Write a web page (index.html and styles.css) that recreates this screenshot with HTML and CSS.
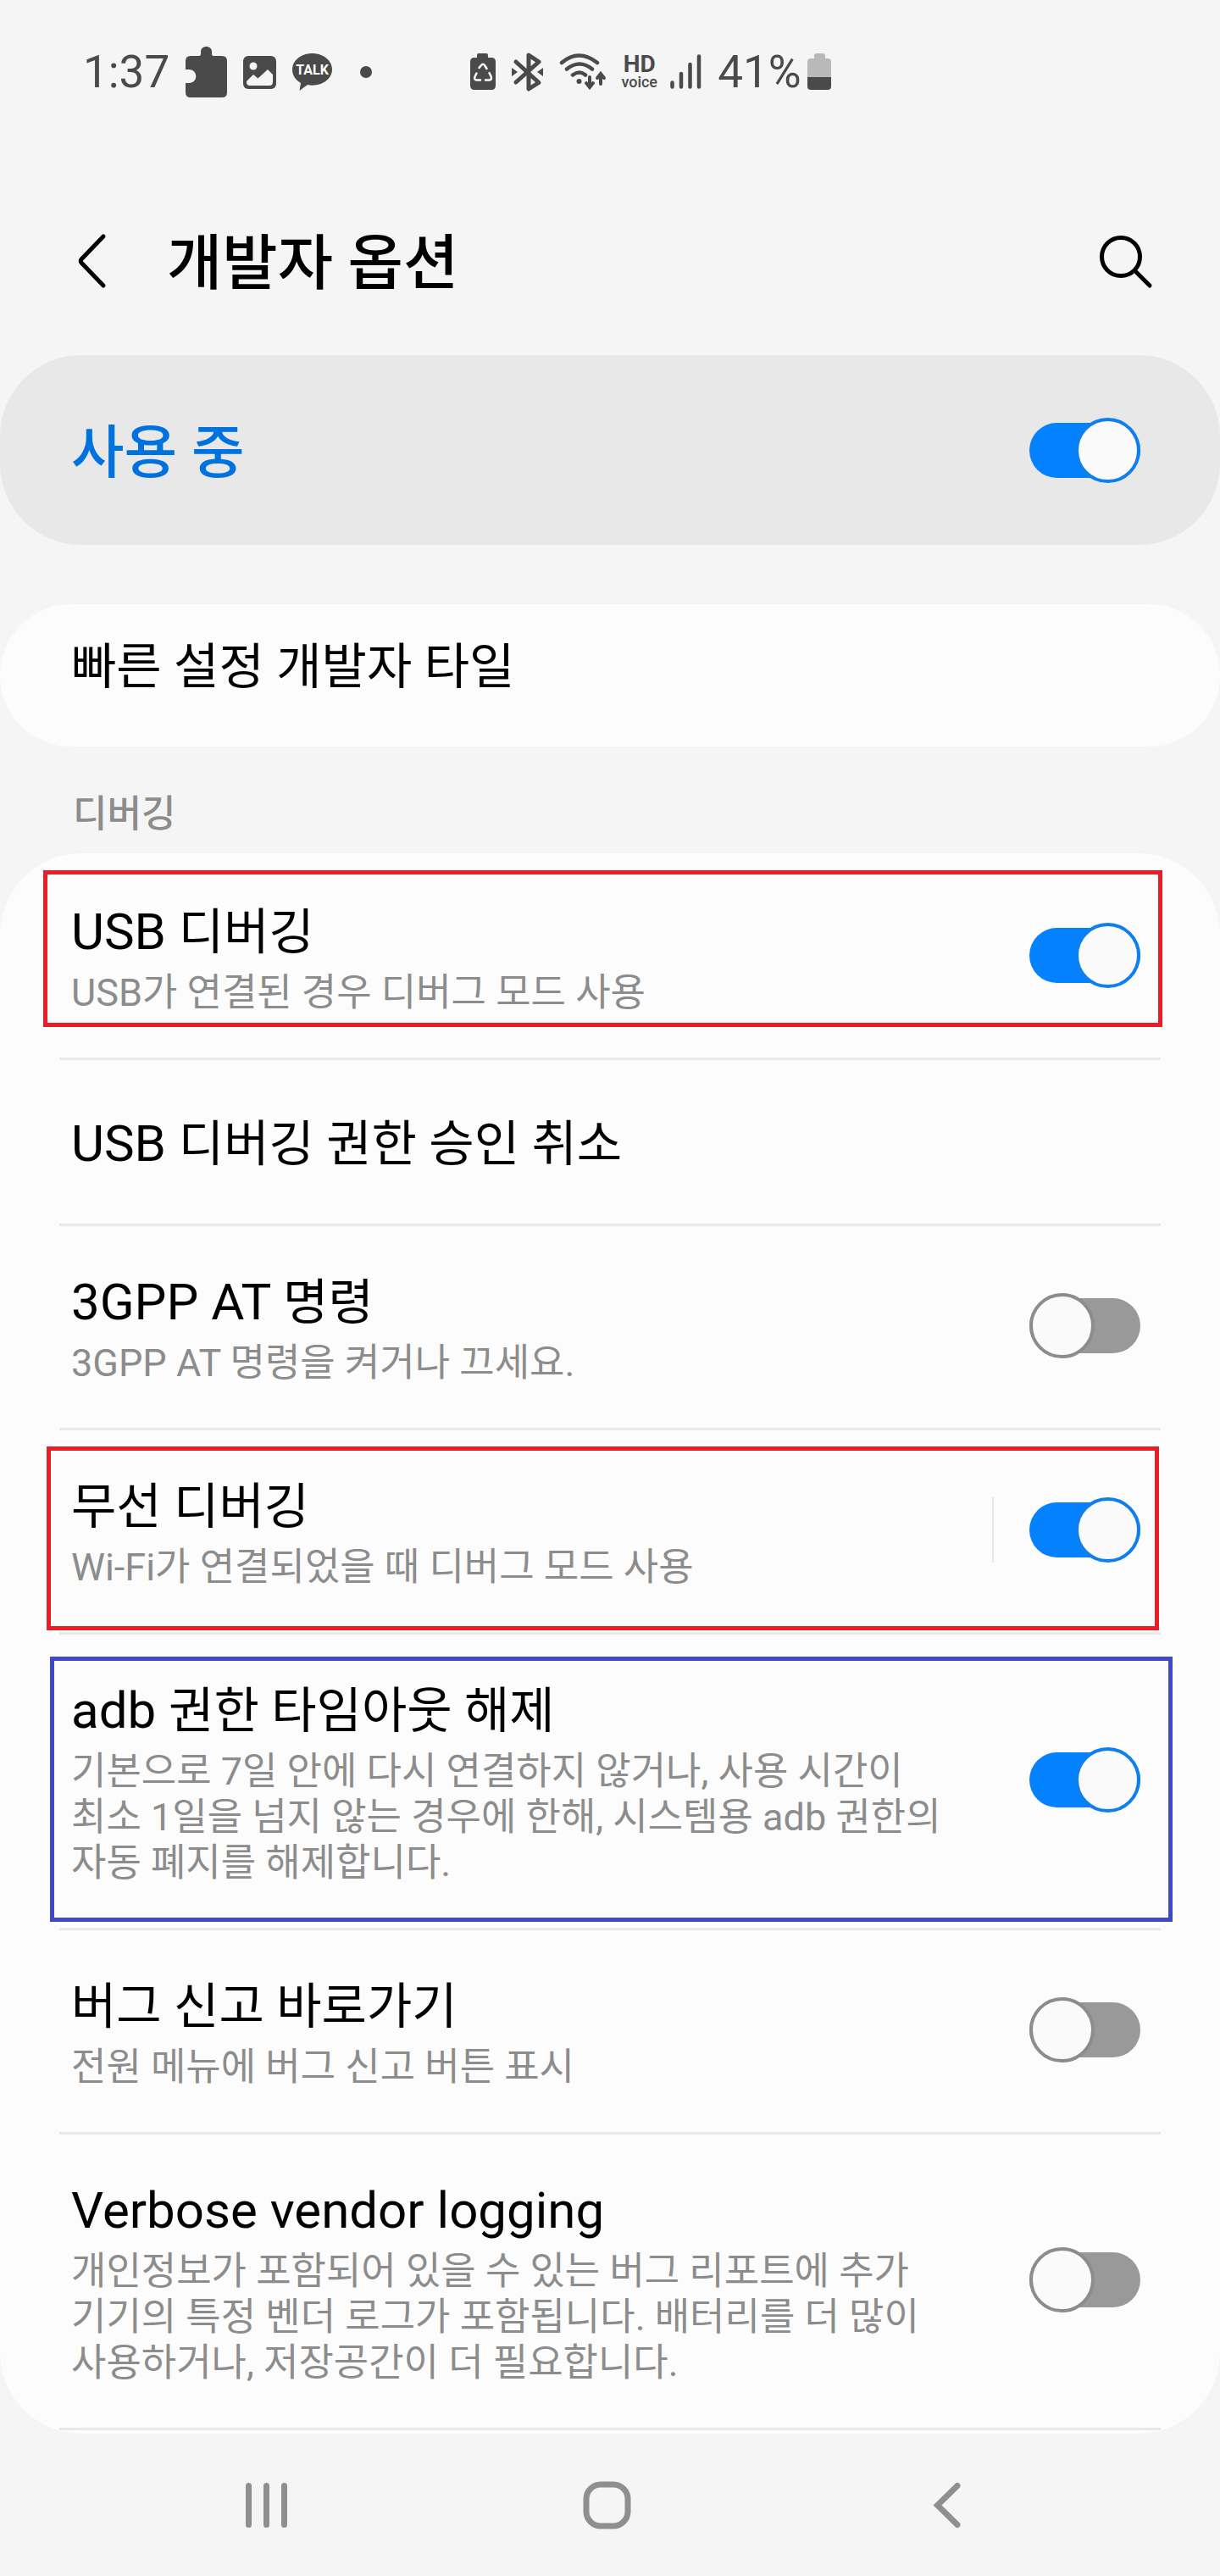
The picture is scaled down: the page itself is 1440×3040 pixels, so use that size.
FILE: index.html
```html
<!DOCTYPE html>
<html lang="ko">
<head>
<meta charset="utf-8">
<meta name="viewport" content="width=device-width, initial-scale=1">
<title>개발자 옵션</title>
<link rel="stylesheet" href="styles.css">
</head>
<body>
  <div class="status-bar">
    <div class="status-left">
      <span>1:37</span>
      <svg width="49" height="60" viewBox="0 0 49 60" fill="#4a4a4a"><path d="M6 11h10c1.500 0 2-1 2-3V6c0-8 13-8 13 0v2c0 2 .5 3 2 3h10q6 0 6 6v37q0 6-6 6H6q-6 0-6-6V43h4c11 0 11-16 0-16H0V17q0-6 6-6z"/></svg>
      <svg width="39" height="60" viewBox="0 0 39 60"><rect y="11" width="39" height="39" rx="6" fill="#4a4a4a"/><circle cx="12" cy="23" r="4.500" fill="#f5f5f5"/><path d="M4 41l8-8 5.500 4.500L29 27l6 6v9q0 4-4 4H8q-4 0-4-4z" fill="#f5f5f5"/></svg>
      <svg width="47" height="60" viewBox="0 0 47 60"><path d="M23.500 8C10.500 8 0 16.500 0 27c0 7 4 12.500 10 16l-1.500 9L18 45q2.500.7 5.500.7C36.500 45.700 47 37.500 47 27S36.500 8 23.500 8z" fill="#4a4a4a"/><text x="23.500" y="33" text-anchor="middle" class="talk">TALK</text></svg>
      <svg class="dot" width="14" height="60" viewBox="0 0 14 60"><circle cx="7" cy="30" r="7" fill="#4a4a4a"/></svg>
    </div>
    <div class="status-right">
      <svg width="30" height="60" viewBox="0 0 30 60"><path d="M5 13h3v-3q0-2 2-2h9q2 0 2 2v3h4q5 0 5 5v28q0 5-5 5H5q-5 0-5-5V18q0-5 5-5z" fill="#4a4a4a"/><g fill="none" stroke="#fff" stroke-width="2.500" stroke-linecap="round"><path d="M10.500 25l2.500-3q2-2.500 4 0l2.500 4"/><path d="M22.500 31l2 4q1.500 4-2 4.500h-4.500"/><path d="M12 39.500H7.500q-3.500-.5-2-4l2-4"/></g></svg>
      <svg width="37" height="60" viewBox="0 0 37 60"><path d="M5 18l27 24.500-12 7.500V10l12 8L5 42" fill="none" stroke="#4a4a4a" stroke-width="5" stroke-linejoin="round" stroke-linecap="round"/><path d="M0 25l7 5-7 5zM37 25l-7 5 7 5z" fill="#4a4a4a"/></svg>
      <svg width="56" height="60" viewBox="0 0 56 60" fill="none" stroke="#4a4a4a" stroke-width="4.500" stroke-linecap="round"><path d="M3 19q20-17 42 0M9 26.500q15-12 30 0M16 33.500q8-6 15 0"/><circle cx="23.500" cy="41" r="3" fill="#4a4a4a" stroke="none"/><path d="M36 36v11m-4-4l4 5 4-5M49 44V33m-4 4l4-5 4 5" stroke-width="4"/></svg>
      <div class="hd"><b>HD</b><span>voice</span></div>
      <svg width="37" height="60" viewBox="0 0 37 60" stroke="#4a4a4a" stroke-width="4.500" stroke-linecap="round"><path d="M2.500 42.500v5M13 32v15.500M23.500 21v26.500M34 11.500v36"/></svg>
      <span>41%</span>
      <svg class="battery" width="28" height="60" viewBox="0 0 28 60"><path d="M4 14h4v-3q0-3 3-3h7q3 0 3 3v3h3q4 0 4 4v18H0V18q0-4 4-4z" fill="#b9b9b9"/><path d="M0 36h28v11q0 4-4 4H4q-4 0-4-4z" fill="#4a4a4a"/></svg>
    </div>
  </div>

  <header class="header">
    <button class="icon-btn" type="button" aria-label="뒤로">
      <svg width="37" height="68" viewBox="0 0 37 68" fill="none" stroke="#000" stroke-width="5" stroke-linecap="round" stroke-linejoin="round"><path d="M32 5L6 32q-1.500 2 0 4l26 27"/></svg>
    </button>
    <h1>개발자 옵션</h1>
    <button class="icon-btn" type="button" aria-label="검색">
      <svg width="66" height="68" viewBox="0 0 66 68" fill="none" stroke="#000" stroke-width="5" stroke-linecap="round"><circle cx="27" cy="29" r="22.500"/><path d="M43.500 45.500L61 63"/></svg>
    </button>
  </header>

  <main>
    <div class="banner">
      <label for="devOptions">사용 중</label>
      <input class="switch" type="checkbox" id="devOptions" checked>
    </div>

    <section class="card">
      <div class="row row-tile">
        <div class="text"><a class="title" href="#tiles">빠른 설정 개발자 타일</a></div>
      </div>
    </section>

    <h2>디버깅</h2>
    <section class="card card-list">
      <div class="row boxed box-usb">
        <div class="text">
          <label class="title" for="usbDebug"><span lang="en">USB </span>디버깅</label>
          <p>USB가 연결된 경우 디버그 모드 사용</p>
        </div>
        <input class="switch" type="checkbox" id="usbDebug" checked>
      </div>
      <div class="row row-single">
        <div class="text"><a class="title" href="#revoke"><span lang="en">USB </span>디버깅 권한 승인 취소</a></div>
      </div>
      <div class="row">
        <div class="text">
          <label class="title" for="atCommand"><span lang="en">3GPP AT </span>명령</label>
          <p>3GPP AT 명령을 켜거나 끄세요.</p>
        </div>
        <input class="switch" type="checkbox" id="atCommand">
      </div>
      <div class="row boxed box-wifi">
        <div class="text">
          <label class="title" for="wifiDebug">무선 디버깅</label>
          <p>Wi-Fi가 연결되었을 때 디버그 모드 사용</p>
        </div>
        <span class="split"></span>
        <input class="switch" type="checkbox" id="wifiDebug" checked>
      </div>
      <div class="row boxed box-adb">
        <div class="text">
          <label class="title" for="adbTimeout"><span lang="en">adb </span>권한 타임아웃 해제</label>
          <p>기본으로 7일 안에 다시 연결하지 않거나, 사용 시간이 최소 1일을 넘지 않는 경우에 한해, 시스템용 adb 권한의 자동 폐지를 해제합니다.</p>
        </div>
        <input class="switch" type="checkbox" id="adbTimeout" checked>
      </div>
      <div class="row">
        <div class="text">
          <label class="title" for="bugReport">버그 신고 바로가기</label>
          <p>전원 메뉴에 버그 신고 버튼 표시</p>
        </div>
        <input class="switch" type="checkbox" id="bugReport">
      </div>
      <div class="row">
        <div class="text">
          <label class="title" for="vendorLog"><span lang="en">Verbose vendor logging</span></label>
          <p>개인정보가 포함되어 있을 수 있는 버그 리포트에 추가 기기의 특정 벤더 로그가 포함됩니다. 배터리를 더 많이 사용하거나, 저장공간이 더 필요합니다.</p>
        </div>
        <input class="switch" type="checkbox" id="vendorLog">
      </div>
    </section>
  </main>

  <nav class="nav-bar">
    <button class="icon-btn" type="button" aria-label="최근 앱">
      <svg width="57" height="57" viewBox="0 0 57 57" stroke="#8f8f8f" stroke-width="7" stroke-linecap="round"><path d="M7.500 5.500v46M28.500 5.500v46M49.500 5.500v46"/></svg>
    </button>
    <button class="icon-btn" type="button" aria-label="홈">
      <svg width="57" height="57" viewBox="0 0 57 57" fill="none" stroke="#8f8f8f" stroke-width="7"><rect x="4" y="4" width="49" height="49" rx="17"/></svg>
    </button>
    <button class="icon-btn" type="button" aria-label="이전">
      <svg width="57" height="57" viewBox="0 0 57 57" fill="none" stroke="#8f8f8f" stroke-width="7" stroke-linecap="round"><path d="M41 5.500L17.500 28.500 41 51.500"/></svg>
    </button>
  </nav>
</body>
</html>
```

FILE: styles.css
```css
*,
*::before,
*::after {
  box-sizing: border-box;
}

body {
  margin: 0;
  background: #f5f5f5;
  color: #000;
  font-family: Roboto, "Noto Sans CJK KR", sans-serif;
  word-break: keep-all;
}

svg {
  display: block;
}

h1, h2, p {
  margin: 0;
}

a {
  color: inherit;
  text-decoration: none;
}

/* status bar */
.status-bar {
  display: flex;
  height: 170px;
  padding: 0 98px;
  gap: 116px;
  align-items: center;
  color: #4a4a4a;
  font-size: 53px;
  line-height: 60px;
}

.status-left,
.status-right {
  display: flex;
  align-items: center;
  gap: 19px;
}

.dot {
  margin-left: 14px;
}

.talk {
  fill: #fff;
  font-size: 16px;
  font-weight: 700;
}

.hd {
  display: flex;
  flex-direction: column;
  align-items: center;
  width: 43px;
  margin: 0 -4px 0 -2px;
}

.hd b {
  font-size: 28px;
  line-height: 24px;
}

.hd span {
  font-size: 18px;
  font-weight: 500;
  line-height: 18px;
}

.battery {
  margin-left: -12px;
}

/* title bar */
.icon-btn {
  padding: 0;
  border: none;
  background: none;
  cursor: pointer;
}

.header {
  display: flex;
  align-items: center;
  height: 249px;
  padding: 26px 78px 0 90px;
}

.header h1 {
  flex: 1;
  margin-left: 70px;
  padding-top: 6px;
  font-size: 71px;
  font-weight: 500;
  line-height: 84px;
}

/* cards */
.banner {
  display: flex;
  align-items: center;
  justify-content: space-between;
  height: 224px;
  padding: 0 94px 0 84px;
  border-radius: 96px;
  background: #e8e8e8;
  color: #0072de;
  font-size: 68px;
  font-weight: 500;
  line-height: 84px;
}

.banner label {
  padding-top: 8px;
}

.card {
  margin-top: 70px;
  border-radius: 84px;
  background: #fcfcfc;
}

.card-list {
  margin-top: 0;
  border-radius: 96px;
}

.card-list::after {
  content: "";
  display: block;
  height: 7px;
  margin: 0 70px;
  border-top: 3px solid #e8e8e8;
}

h2 {
  padding: 50px 84px 16px 86px;
  color: #8c8c8c;
  font-size: 44px;
  font-weight: 500;
  line-height: 60px;
}

.row {
  display: flex;
  align-items: center;
  position: relative;
  margin: 0 70px;
  padding: 51px 24px 49px 14px;
  border-top: 3px solid #e8e8e8;
}

.row:first-child {
  border-top-color: transparent;
}

.row-tile {
  padding-top: 32px;
  padding-bottom: 55px;
}

.row-single {
  padding-top: 60px;
  padding-bottom: 55px;
}

.text {
  flex: 1;
  margin-right: 80px;
}

.title {
  display: block;
  font-size: 58px;
  line-height: 78px;
}

.title span {
  font-size: 60px;
}

.text p {
  margin-top: 6px;
  color: #8c8c8c;
  font-size: 45px;
  line-height: 54px;
}

.split {
  width: 2px;
  height: 77px;
  margin-right: 42px;
  background: #e8e8e8;
}

.box-wifi .text {
  margin-right: 36px;
}

/* highlight frames over the rows */
.boxed::after {
  content: "";
  position: absolute;
  border: 5px solid #ed1c24;
  pointer-events: none;
}

.box-usb::after {
  inset: 17px -2px 36px -19px;
}

.box-wifi::after {
  inset: 19px 2px 2px -15px;
}

.box-adb::after {
  inset: 26px -14px 7px -11px;
  border-color: #3f48cc;
}

/* switch */
.switch {
  appearance: none;
  display: grid;
  flex: none;
  align-items: center;
  width: 131px;
  height: 77px;
  margin: 0;
  cursor: pointer;
}

.row .switch,
.split {
  margin-bottom: 5px;
}

.switch::before,
.switch::after {
  content: "";
  grid-area: 1 / 1;
}

.switch::before {
  height: 65px;
  border-radius: 33px;
  background: #999;
}

.switch::after {
  width: 77px;
  height: 77px;
  border: 4px solid #8c8c8c;
  border-radius: 50%;
  background: #fafafa;
}

.switch:checked::before {
  background: #0381fe;
}

.switch:checked::after {
  justify-self: end;
  border-color: #0f7fee;
}

/* navigation bar */
.nav-bar {
  display: flex;
  justify-content: space-between;
  align-items: center;
  height: 168px;
  padding: 0 294px 0 286px;
}
```
